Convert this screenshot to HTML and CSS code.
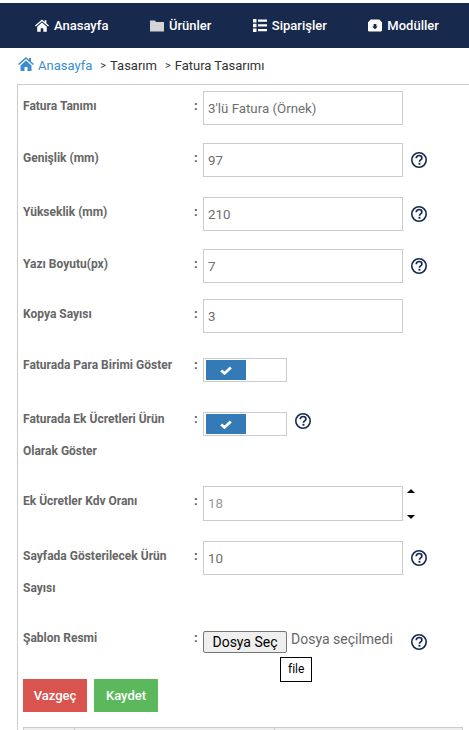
FILE: index.html
```html
<!DOCTYPE html>
<html lang="tr">

<head>
  <meta charset="UTF-8">
  <meta name="viewport" content="width=device-width, initial-scale=1.0">
  <title>Fatura Tasarımı</title>
  <link rel="stylesheet" href="styles.css">
</head>

<body>
  <!-- Tekrar eden ikonlar -->
  <svg class="defs">
    <symbol id="i-help" viewBox="0 0 16 16">
      <circle cx="8" cy="8" r="7.200" fill="none" stroke="#17294d" stroke-width="1.600"/>
      <path d="M5.200 6.200C5.300 4.500 6.500 3.500 8.100 3.500c1.700 0 2.800 1 2.800 2.400 0 1.100-.7 1.700-1.500 2.200-.7.500-.9.800-.9 1.600" fill="none" stroke="#17294d" stroke-width="1.700"/>
      <rect x="7.500" y="10.800" width="1.900" height="1.900" fill="#17294d"/>
    </symbol>
    <symbol id="i-check" viewBox="0 0 12 9">
      <path d="M1.200 4.500 4.500 7.400 10.800 1.400" fill="none" stroke="#fff" stroke-width="2.800"/>
    </symbol>
  </svg>

  <!-- Ust menu -->
  <nav class="topnav">
    <a class="topnav-item">
      <svg class="topnav-icon" viewBox="0 0 16 14"><path d="M8 0 0 7l1 1 7-6 7 6 1-1-3-2.600V1h-2v1.700zM2.500 8.500V14h4v-4h3v4h4V8.500L8 3.600z" fill="#fff"/></svg>
      Anasayfa
    </a>
    <a class="topnav-item">
      <svg class="topnav-icon" viewBox="0 0 14 12"><path d="M0 1h5l1 1.500h8V12H0z" fill="#d4d4d4"/></svg>
      Ürünler
    </a>
    <a class="topnav-item">
      <svg class="topnav-icon" viewBox="0 0 14 13"><path d="M0 0h3.500v3.500H0zM0 4.700h3.500v3.500H0zM0 9.400h3.500v3.500H0zM5 .5h9v2.200H5zM5 5.300h9v2.200H5zM5 10h9v2.200H5z" fill="#fff"/></svg>
      Siparişler
    </a>
    <a class="topnav-item">
      <svg class="topnav-icon" viewBox="0 0 15 13"><path fill-rule="evenodd" d="M3 0h9l3 3v8.500a1.500 1.500 0 0 1-1.500 1.500h-12A1.500 1.500 0 0 1 0 11.500V3zM6 5v2.500H4.500l3 3 3-3H9V5z" fill="#fff"/></svg>
      Modüller
    </a>
  </nav>

  <!-- Yol -->
  <div class="crumbs">
    <svg class="crumbs-home" viewBox="0 0 16 14"><path d="M8 0 0 7l1 1 7-6 7 6 1-1-3-2.600V1h-2v1.700zM2.500 8.500V14h4v-4h3v4h4V8.500L8 3.600z" fill="#3c8dce"/></svg>
    <a class="crumbs-link">Anasayfa</a>
    <span class="crumbs-sep">&gt;</span>
    <span class="crumbs-text">Tasarım</span>
    <span class="crumbs-sep">&gt;</span>
    <span class="crumbs-text">Fatura Tasarımı</span>
  </div>

  <main class="panel">
    <div class="row">
      <label class="row-label">Fatura Tanımı</label>
      <span class="row-colon">:</span>
      <input class="field" type="text" value="3'lü Fatura (Örnek)">
    </div>

    <div class="row row-gap-20">
      <label class="row-label">Genişlik (mm)</label>
      <span class="row-colon">:</span>
      <input class="field" type="text" value="97">
      <svg class="help"><use href="#i-help"/></svg>
    </div>

    <div class="row">
      <label class="row-label">Yükseklik (mm)</label>
      <span class="row-colon">:</span>
      <input class="field" type="text" value="210">
      <svg class="help"><use href="#i-help"/></svg>
    </div>

    <div class="row row-gap-16">
      <label class="row-label">Yazı Boyutu(px)</label>
      <span class="row-colon">:</span>
      <input class="field" type="text" value="7">
      <svg class="help"><use href="#i-help"/></svg>
    </div>

    <div class="row row-gap-25">
      <label class="row-label">Kopya Sayısı</label>
      <span class="row-colon">:</span>
      <input class="field" type="text" value="3">
    </div>

    <div class="row row-gap-30">
      <label class="row-label row-label-short">Faturada Para Birimi Göster</label>
      <span class="row-colon row-colon-short">:</span>
      <div class="switch">
        <span class="switch-on"><svg class="switch-check"><use href="#i-check"/></svg></span>
      </div>
    </div>

    <div class="row row-gap-19">
      <label class="row-label row-label-short">Faturada Ek Ücretleri Ürün Olarak Göster</label>
      <span class="row-colon row-colon-short">:</span>
      <div class="switch">
        <span class="switch-on"><svg class="switch-check"><use href="#i-check"/></svg></span>
      </div>
      <svg class="help help-switch"><use href="#i-help"/></svg>
    </div>

    <div class="row row-gap-20">
      <label class="row-label">Ek Ücretler Kdv Oranı</label>
      <span class="row-colon">:</span>
      <input class="field field-number" type="text" value="18">
      <div class="spin">
        <span class="spin-up"></span>
        <span class="spin-down"></span>
      </div>
    </div>

    <div class="row row-gap-27">
      <label class="row-label">Sayfada Gösterilecek Ürün Sayısı</label>
      <span class="row-colon">:</span>
      <input class="field" type="text" value="10">
      <svg class="help"><use href="#i-help"/></svg>
    </div>

    <div class="row row-file">
      <label class="row-label row-label-short">Şablon Resmi</label>
      <span class="row-colon row-colon-short">:</span>
      <div class="file">
        <button class="file-btn" type="button">Dosya Seç</button>
        <span class="file-name">Dosya seçilmedi</span>
        <span class="tip">file</span>
      </div>
      <svg class="help help-file"><use href="#i-help"/></svg>
    </div>

    <div class="actions">
      <button class="btn btn-cancel" type="button">Vazgeç</button>
      <button class="btn btn-save" type="button">Kaydet</button>
    </div>

    <table class="grid">
      <tr>
        <th class="grid-first"></th>
        <th class="grid-second"></th>
        <th></th>
      </tr>
    </table>
  </main>
</body>

</html>
```

FILE: styles.css
```css
* {
  box-sizing: border-box;
}

html,
body {
  height: 730px;
  overflow: hidden;
}

body {
  margin: 0;
  padding-top: 3px;
  background: #fff;
  font-family: Roboto, sans-serif;
  color: #333;
}

.defs {
  display: none;
}

/* Ust menu */
.topnav {
  display: flex;
  align-items: center;
  height: 45px;
  padding-left: 35px;
  background: #17294d;
}

.topnav-item {
  display: flex;
  align-items: center;
  gap: 5px;
  margin-right: 41.500px;
  color: #fff;
  font-size: 13px;
  font-weight: 500;
  white-space: nowrap;
}

.topnav-icon {
  width: 14px;
  height: 13px;
}

/* Yol */
.crumbs {
  display: flex;
  align-items: center;
  height: 36px;
  padding-left: 18px;
  padding-bottom: 2px;
  font-size: 13px;
  white-space: nowrap;
}

.crumbs-home {
  width: 16px;
  height: 14px;
  margin-right: 4px;
  margin-top: -3px;
}

.crumbs-link {
  color: #3c8dce;
}

.crumbs-sep {
  margin-left: 8px;
  margin-right: 4px;
  font-size: 11px;
}

/* Form */
.panel {
  margin-left: 17px;
  padding: 6px 0 0 5px;
  border-top: 1px solid #ccc;
  border-left: 1px solid #ccc;
}

.row {
  display: flex;
  align-items: flex-start;
  margin-bottom: 18px;
}

.row-gap-16 { margin-bottom: 16px; }
.row-gap-19 { margin-bottom: 19px; }
.row-gap-20 { margin-bottom: 20px; }
.row-gap-25 { margin-bottom: 25px; }
.row-gap-27 { margin-bottom: 27px; }
.row-gap-30 { margin-bottom: 30px; }

.row-label {
  width: 169px;
  flex: none;
  margin-top: -1px;
  padding-right: 4px;
  font-size: 12px;
  font-weight: 700;
  line-height: 32px;
  color: #666;
}

.row-label-short {
  margin-top: -9px;
}

.row-colon {
  width: 11px;
  flex: none;
  margin-top: -1px;
  padding-left: 2px;
  font-size: 13px;
  font-weight: 700;
  line-height: 32px;
  color: #555;
}

.row-colon-short {
  margin-top: -9px;
}

.field {
  width: 200px;
  height: 34px;
  flex: none;
  padding: 0 4px;
  border: 1px solid #ccc;
  border-radius: 0;
  outline: none;
  font-family: Roboto, sans-serif;
  font-size: 13.300px;
  color: #6e6e6e;
}

.field-number {
  height: 35px;
  color: #999;
}

.help {
  width: 16px;
  height: 16px;
  margin: 9px 0 0 8px;
  flex: none;
}

.help-switch {
  margin: 1px 0 0 8px;
}

.help-file {
  margin: 3px 0 0 18px;
}

/* Anahtar */
.switch {
  width: 84px;
  height: 24px;
  padding: 1px;
  border: 1px solid #ccc;
  flex: none;
}

.switch-on {
  display: flex;
  align-items: center;
  justify-content: center;
  width: 40px;
  height: 20px;
  margin-left: 1px;
  background: #337ab7;
}

.switch-check {
  width: 12px;
  height: 9px;
}

/* Sayi oklari */
.spin {
  display: flex;
  flex-direction: column;
  justify-content: space-between;
  height: 30px;
  margin: 3px 0 0 4px;
}

.spin-up,
.spin-down {
  width: 0;
  height: 0;
  border-left: 4px solid transparent;
  border-right: 4px solid transparent;
}

.spin-up {
  border-bottom: 4px solid #000;
}

.spin-down {
  border-top: 4px solid #000;
}

/* Dosya */
.row-file {
  margin-bottom: 25px;
}

.file {
  position: relative;
  display: flex;
  align-items: flex-start;
  gap: 4px;
}

.file-btn {
  width: 84px;
  height: 22px;
  padding: 0;
  border: 1px solid #767676;
  border-radius: 2px;
  background: #efefef;
  font-family: Roboto, sans-serif;
  font-size: 14px;
  color: #000;
}

.file-name {
  font-size: 14px;
  line-height: 16px;
  color: #666;
}

.tip {
  position: absolute;
  top: 26px;
  left: 77px;
  padding: 4px 7px;
  border: 1px solid #000;
  background: #fff;
  font-size: 12px;
  line-height: 15px;
  color: #000;
}

/* Butonlar */
.actions {
  display: flex;
  gap: 7px;
  margin-bottom: 15px;
}

.btn {
  width: 64px;
  height: 33px;
  padding: 0;
  border: none;
  color: #fff;
  font-family: Roboto, sans-serif;
  font-size: 13px;
  font-weight: 500;
}

.btn-cancel {
  background: #d9534f;
}

.btn-save {
  background: #5cb85c;
}

/* Tablo */
.grid {
  width: 440px;
  height: 30px;
  border-collapse: collapse;
}

.grid th {
  border: 1px solid #ccc;
  background: #eee;
}

.grid-first {
  width: 51px;
}

.grid-second {
  width: 200px;
}
```
